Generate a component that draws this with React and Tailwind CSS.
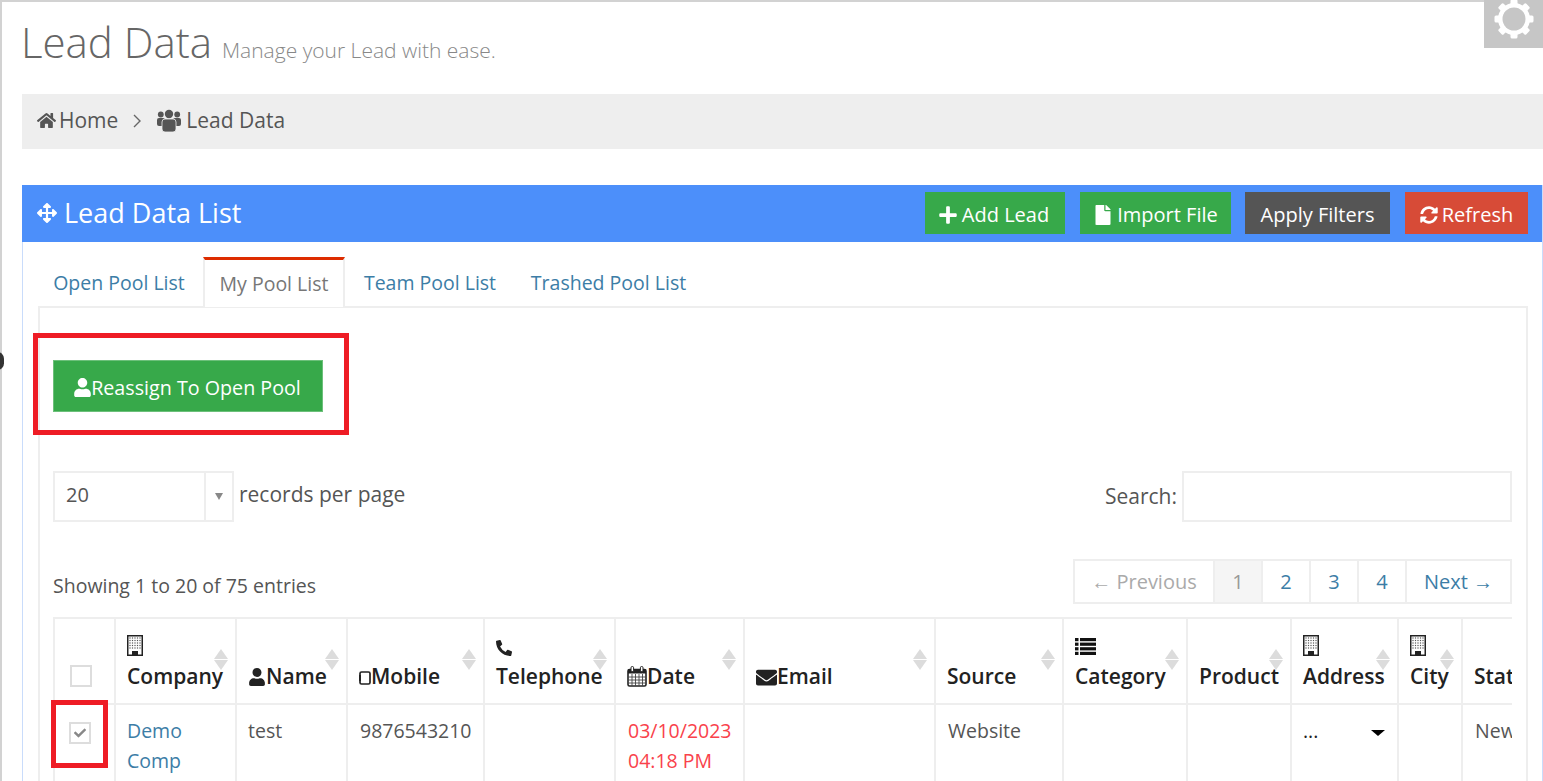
import React from "react";
import { FaHome, FaPlus, FaFile, FaSyncAlt, FaUser, FaPhoneAlt, FaEnvelope, FaArrowsAlt, FaCheck } from "react-icons/fa";

function Building() {
  return (
    <svg width="16" height="21" viewBox="0 0 16 21" className="block">
      <rect x="0.75" y="0.75" width="14.5" height="19.5" fill="#fff" stroke="#222" strokeWidth="1.5" />
      {[3, 5.5, 8, 10.5, 13].map((y) =>
        [3, 5.5, 8, 10.5, 13].map((x) => <rect key={x + "-" + y} x={x - 0.6} y={y - 0.6} width="1.2" height="1.2" fill="#555" />)
      )}
      <rect x="5" y="16" width="6" height="4" fill="#222" />
    </svg>
  );
}

function Mobile() {
  return (
    <svg width="12" height="14" viewBox="0 0 12 14" className="inline-block align-[-1px]">
      <rect x="1" y="1" width="10" height="12" rx="1.5" fill="none" stroke="#222" strokeWidth="1.7" />
      <rect x="0" y="4" width="2" height="6" fill="#222" />
    </svg>
  );
}

function Calendar() {
  return (
    <svg width="20" height="21" viewBox="0 0 20 21" className="inline-block align-[-3px]">
      <rect x="1" y="3.5" width="18" height="16.5" rx="1.5" fill="#fff" stroke="#222" strokeWidth="1.6" />
      <rect x="1" y="3.5" width="18" height="4" fill="#222" />
      <path d="M5 8v12M8.5 8v12M12 8v12M15.5 8v12M1 11h18M1 14h18M1 17h18" stroke="#444" strokeWidth="0.9" />
      <rect x="4" y="0.5" width="2.6" height="5" rx="1.2" fill="#fff" stroke="#222" strokeWidth="1" />
      <rect x="13.4" y="0.5" width="2.6" height="5" rx="1.2" fill="#fff" stroke="#222" strokeWidth="1" />
    </svg>
  );
}

function ListIcon() {
  return (
    <svg width="21" height="18" viewBox="0 0 21 18" className="block" fill="#111">
      {[0, 4.6, 9.2, 13.8].map((y) => (
        <g key={y}>
          <rect x="0" y={y} width="3.5" height="3.2" />
          <rect x="5" y={y} width="16" height="3.2" />
        </g>
      ))}
    </svg>
  );
}

function People() {
  return (
    <svg width="24" height="23" viewBox="0 0 24 23" fill="#555" className="block">
      <circle cx="12" cy="5" r="4.2" />
      <circle cx="3.8" cy="5.5" r="2.9" />
      <circle cx="20.2" cy="5.5" r="2.9" />
      <rect x="0" y="9" width="8" height="8" rx="2" />
      <rect x="16" y="9" width="8" height="8" rx="2" />
      <rect x="5" y="10" width="14" height="13" rx="3" stroke="#eee" strokeWidth="0.8" />
    </svg>
  );
}

function Gear() {
  return (
    <svg width="40" height="40" viewBox="0 0 40 40" className="block">
      {[0, 45, 90, 135].map((a) => (
        <rect key={a} x="16.5" y="0.5" width="7" height="39" rx="1.5" fill="#fff" transform={`rotate(${a} 20 20)`} />
      ))}
      <circle cx="20" cy="20" r="16" fill="#fff" />
      <circle cx="20" cy="20" r="11.5" fill="#c6c6c6" />
    </svg>
  );
}

function Sort() {
  return (
    <span className="absolute right-[7px] top-[30px] flex flex-col gap-[1px]">
      <span className="h-0 w-0 border-x-[7px] border-b-[10px] border-x-transparent border-b-[#dcdcdc]" />
      <span className="h-0 w-0 border-x-[7px] border-t-[10px] border-x-transparent border-t-[#dcdcdc]" />
    </span>
  );
}

const columns = [
  { w: "w-[61px]", sort: false, content: <span className="mb-[4px] ml-[4px] block h-[22px] w-[22px] border-2 border-[#ddd]" /> },
  { w: "w-[121px]", sort: true, top: <Building />, content: "Company" },
  { w: "w-[111px]", sort: true, content: <><FaUser className="inline-block text-[18px] align-[-2px]" />Name</> },
  { w: "w-[137px]", sort: true, content: <><Mobile />Mobile</> },
  { w: "w-[131px]", sort: true, top: <FaPhoneAlt className="block text-[16px]" />, content: "Telephone" },
  { w: "w-[129px]", sort: true, content: <><Calendar />Date</> },
  { w: "w-[191px]", sort: true, content: <><FaEnvelope className="inline-block text-[21px] align-[-4px]" />Email</> },
  { w: "w-[128px]", sort: true, content: "Source" },
  { w: "w-[124px]", sort: true, top: <ListIcon />, content: "Category" },
  { w: "w-[104px]", sort: true, content: "Product" },
  { w: "w-[107px]", sort: true, top: <Building />, content: "Address" },
  { w: "w-[64px]", sort: true, top: <Building />, content: "City" },
  { w: "w-[100px]", sort: false, content: "Status" },
];

function HeadButton({ color, icon, children, width }) {
  return (
    <button className={`flex h-[42px] items-center justify-center gap-[4px] pt-[4px] text-[20px] text-white ${color} ${width}`}>
      {icon}
      {children}
    </button>
  );
}

const cell = "border-2 border-[#eee] pr-[11px] pl-[11px] pt-[11px] leading-[30px] text-[19.5px]";
const cellShift = "border-2 border-[#eee] pr-[10px] pl-[12px] pt-[11px] leading-[30px] text-[19.5px]";

export default function App() {
  return (
    <div className="relative h-[781px] w-full overflow-hidden bg-white font-['Open_Sans',sans-serif] text-[20px] text-[#555]">
      <div className="h-full border-t-2 border-l-2 border-[#d2d2d2] pl-[20px]">
        <div className="flex h-[92px] items-baseline gap-[10px] pt-[9px]">
          <span className="-ml-px text-[42px] font-light leading-[62px] text-[#666]">Lead Data</span>
          <span className="text-[21px] font-light text-[#888]">Manage your Lead with ease.</span>
        </div>

        <div className="flex h-[55px] items-center bg-[#eee] pb-[2px] pl-[15px] text-[21px] text-[#555]">
          <FaHome className="text-[19px]" />
          <span className="ml-[3px]">Home</span>
          <svg width="8" height="14" viewBox="0 0 8 14" className="ml-[15px]" fill="none" stroke="#666" strokeWidth="1.4">
            <path d="M1 1l6 6-6 6" />
          </svg>
          <span className="ml-[16px]"><People /></span>
          <span className="ml-[5px]">Lead Data</span>
        </div>

        <div className="mt-[36px] border-x border-[#c9dcfb]">
          <div className="-ml-px flex h-[57px] items-center justify-between bg-[#4c8ffa] pb-[2px] pl-[15px] pr-[14px]">
            <div className="flex items-center gap-[7px] text-[27px] leading-[40px] text-white">
              <FaArrowsAlt className="text-[20px]" />
              <span>Lead Data List</span>
            </div>
            <div className="flex gap-[15px]">
              <HeadButton color="bg-[#37a94a]" width="w-[140px]" icon={<FaPlus className="-ml-[3px] text-[20px]" />}>Add Lead</HeadButton>
              <HeadButton color="bg-[#37a94a]" width="w-[151px]" icon={<FaFile className="text-[20px]" />}>Import File</HeadButton>
              <span className="-ml-px"><HeadButton color="bg-[#555555]" width="w-[145px]">Apply Filters</HeadButton></span>
              <HeadButton color="bg-[#d74b37]" width="w-[123px]" icon={<FaSyncAlt className="text-[18px]" />}>Refresh</HeadButton>
            </div>
          </div>

          <div className="pl-[15px] pr-[14px] pt-[15px]">
            <div className="flex h-[49px] items-end text-[19.5px]">
              <a className="flex h-[49px] w-[165px] items-center justify-center pr-[3px] pt-[2px] text-[#3c7da6]">Open Pool List</a>
              <a className="relative z-10 -mb-px flex h-[50px] w-[142px] items-center justify-center border-x-2 border-t-[3px] border-x-[#eee] border-t-[#dd2c00] bg-white text-[#777]">My Pool List</a>
              <a className="flex h-[49px] w-[170px] items-center justify-center pt-[2px] text-[#3c7da6]">Team Pool List</a>
              <a className="flex h-[49px] w-[187px] items-center justify-center pt-[2px] text-[#3c7da6]">Trashed Pool List</a>
            </div>

            <div className="border-2 border-[#eee] pl-[13px] pr-[14px] pt-[52px]">
              <button className="flex h-[52px] w-[270px] items-center justify-center border border-[#6cc07a] bg-[#37a94a] pr-[2px] pt-[3px] text-[19.7px] text-white">
                <FaUser className="-mr-px text-[19px]" />
                Reassign To Open Pool
              </button>

              <div className="mt-[59px] flex h-[51px] items-center justify-between">
                <div className="flex items-center">
                  <div className="flex h-[51px] w-[181px] items-center border-2 border-[#eee]">
                    <span className="flex-1 pb-[3px] pl-[11px]">20</span>
                    <span className="flex h-full w-[28px] items-center justify-center border-l-2 border-[#eee]">
                      <span className="h-0 w-0 border-x-[4px] border-t-[7px] border-x-transparent border-t-[#888]" />
                    </span>
                  </div>
                  <span className="ml-[5px] pb-[3px] text-[21px]">records per page</span>
                </div>
                <div className="flex items-center">
                  <span className="mr-[5px] text-[21px]">Search:</span>
                  <div className="h-[51px] w-[330px] border-2 border-[#eee]" />
                </div>
              </div>

              <div className="mt-[37px] flex h-[45px] items-center justify-between">
                <span className="mt-[9px] text-[19.5px]">Showing 1 to 20 of 75 entries</span>
                <div className="flex h-[45px] border-2 border-[#eee]">
                  <span className="flex w-[138px] items-center justify-center text-[#aaa]">← Previous</span>
                  <span className="flex w-[48px] items-center justify-center border-l-2 border-[#eee] bg-[#f5f5f5] text-[#999]">1</span>
                  <span className="flex w-[48px] items-center justify-center border-l-2 border-[#eee] text-[#3c7da6]">2</span>
                  <span className="flex w-[48px] items-center justify-center border-l-2 border-[#eee] text-[#3c7da6]">3</span>
                  <span className="flex w-[48px] items-center justify-center border-l-2 border-[#eee] text-[#3c7da6]">4</span>
                  <span className="flex w-[105px] items-center justify-center border-l-2 border-[#eee] text-[#3c7da6]">Next →</span>
                </div>
              </div>

              <div className="mt-[13px] overflow-hidden">
                <table className="w-[1508px] table-fixed border-collapse">
                  <colgroup>
                    {columns.map((c, i) => <col key={i} className={c.w} />)}
                  </colgroup>
                  <thead>
                    <tr className="h-[86px]">
                      {columns.map((c, i) => (
                        <th key={i} className="relative whitespace-nowrap border-2 border-[#eee] pb-[12px] pl-[11px] pr-[2px] text-left align-bottom text-[21px] font-[560] leading-[29px] text-[#222]">
                          {c.top && <span className="mb-[6px] block">{c.top}</span>}
                          {c.content}
                          {c.sort && <Sort />}
                        </th>
                      ))}
                    </tr>
                  </thead>
                  <tbody>
                    <tr className="h-[100px] align-top">
                      <td className="border-2 border-[#eee] pl-[14px] pt-[17px]">
                        <span className="flex h-[22px] w-[22px] items-center justify-center border-2 border-[#ddd]">
                          <FaCheck className="text-[12px] text-[#888]" />
                        </span>
                      </td>
                      <td className={`${cell} text-[#3c7da6]`}>Demo<br />Comp</td>
                      <td className={cell}>test</td>
                      <td className={cellShift}>9876543210</td>
                      <td className="border-2 border-[#eee]" />
                      <td className={`${cellShift} text-[#f9424b]`}>03/10/2023<br />04:18 PM</td>
                      <td className="border-2 border-[#eee]" />
                      <td className={cellShift}>Website</td>
                      <td className="border-2 border-[#eee]" />
                      <td className="border-2 border-[#eee]" />
                      <td className={`${cell} text-[#222]`}>
                        <div className="flex items-center justify-between">
                          <span>...</span>
                          <span className="mr-[1px] mt-[3px] h-0 w-0 border-x-[7px] border-t-[6px] border-x-transparent border-t-black" />
                        </div>
                      </td>
                      <td className="border-2 border-[#eee]" />
                      <td className={cellShift}>New</td>
                    </tr>
                  </tbody>
                </table>
              </div>
            </div>
          </div>
        </div>
      </div>

      <div className="absolute right-0 top-0 flex h-[48px] w-[59px] justify-center overflow-hidden bg-[#c6c6c6]">
        <div className="-mt-[1px]"><Gear /></div>
      </div>
      <div className="absolute -left-[9px] top-[352px] h-[18px] w-[13px] rounded-full bg-[#333]" />
      <div className="absolute left-[33px] top-[333px] h-[102px] w-[316px] border-[5px] border-[#ee1c25]" />
      <div className="absolute left-[51px] top-[700px] h-[68px] w-[57px] border-[5px] border-[#ee1c25]" />
    </div>
  );
}
